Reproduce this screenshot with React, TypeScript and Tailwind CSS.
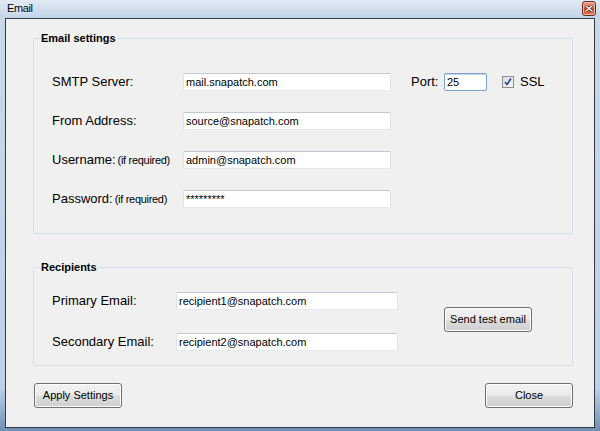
import type { ReactNode } from 'react'

const Input = ({ value, width, focused = false }: { value: string; width: string; focused?: boolean }) => (
  <div
    className={`${width} h-[18px] bg-white border rounded-[2px] flex items-center pl-[2px] text-[11px] leading-none ${
      focused ? 'border-[#7da2ce] shadow-[inset_0_1px_0_#c5daf1]' : 'border-t-[#c4c8cf] border-x-[#dfe2e7] border-b-[#e5e8ec]'
    }`}
  >
    {value}
  </div>
)

const Button = ({ children, className = '' }: { children: ReactNode; className?: string }) => (
  <button
    className={`w-[88px] h-[25px] rounded-[3px] border border-[#707070] bg-[linear-gradient(#f2f2f2_0%,#ebebeb_48%,#dddddd_52%,#cfcfcf_100%)] shadow-[inset_0_0_0_1px_#fcfcfc] text-[11px] text-black ${className}`}
  >
    {children}
  </button>
)

const Label = ({ text, note, width }: { text: string; note?: string; width: string }) => (
  <div className={`${width} shrink-0 flex items-baseline text-[13px]`}>
    <span>{text}</span>
    {note && <span className="ml-[2px] text-[11px] tracking-[-0.3px]">{note}</span>}
  </div>
)

const GroupBox = ({ title, className = '', children }: { title: string; className?: string; children: ReactNode }) => (
  <fieldset className={`w-[540px] border border-[#d5dfe5] rounded-[3px] pl-[6px] ${className}`}>
    <legend className="px-[1px] text-[11px] leading-[13px] font-bold">{title}</legend>
    {children}
  </fieldset>
)

export default function App() {
  return (
    <div className="w-[600px] h-[431px] flex flex-col bg-[linear-gradient(#c9d9eb,#bcd0e6_90%,#6f8fb5)] font-['Liberation_Sans',Arial,sans-serif] text-black">
      {/* title bar */}
      <div className="h-[18px] shrink-0 flex items-start pl-[7px] pr-[4px] bg-[linear-gradient(#e2ebf5,#cfdcec_60%,#c3d4e9)]">
        <span className="mt-[3px] text-[11px] leading-none tracking-[-0.4px] [text-shadow:0_0_5px_#fff]">Email</span>
        <div className="ml-auto mt-[1px] w-[14px] h-[15px] rounded-[3px] border border-[#6b2a1d] bg-[linear-gradient(#f0a58c,#e0603f_48%,#c73d1f_52%,#e07a55)] shadow-[inset_0_0_0_1px_#f6b9a6] flex items-center justify-center">
          <svg width="8" height="7" viewBox="0 0 8 7">
            <path d="M1 1 L7 6 M7 1 L1 6" stroke="#3a1a14" strokeWidth="2.6" strokeLinecap="square" />
            <path d="M1 1 L7 6 M7 1 L1 6" stroke="#fff" strokeWidth="1.4" strokeLinecap="square" />
          </svg>
        </div>
      </div>

      {/* client area */}
      <div className="flex-1 flex px-[5px] pb-[3px]">
        <div className="flex-1 flex flex-col border border-[#2f3a46] bg-[#f0f0f0] pl-[27px]">
          <GroupBox title="Email settings" className="mt-[13px] pt-[28px] pb-[25px]">
            <div className="flex flex-col gap-[21px] pl-[12px]">
              <div className="h-[18px] flex items-center">
                <Label text="SMTP Server:" width="w-[131px]" />
                <Input value="mail.snapatch.com" width="w-[208px]" />
                <span className="ml-[20px] w-[33px] text-[13px]">Port:</span>
                <Input value="25" width="w-[43px]" focused />
                <div className="ml-[15px] w-[12px] h-[12px] border border-[#8e8f8f] bg-[linear-gradient(135deg,#dcdcdc,#fafafa)] flex items-center justify-center">
                  <svg width="8" height="8" viewBox="0 0 8 8">
                    <path d="M1 4 L3 6.5 L7 0.5" fill="none" stroke="#21469a" strokeWidth="1.6" />
                  </svg>
                </div>
                <span className="ml-[6px] text-[13px]">SSL</span>
              </div>
              <div className="h-[18px] flex items-center">
                <Label text="From Address:" width="w-[131px]" />
                <Input value="source@snapatch.com" width="w-[208px]" />
              </div>
              <div className="h-[18px] flex items-center">
                <Label text="Username:" note="(if required)" width="w-[131px]" />
                <Input value="admin@snapatch.com" width="w-[208px]" />
              </div>
              <div className="h-[18px] flex items-center">
                <Label text="Password:" note="(if required)" width="w-[131px]" />
                <Input value="*********" width="w-[208px]" />
              </div>
            </div>
          </GroupBox>

          <GroupBox title="Recipients" className="mt-[27px] pt-[18px] pb-[14px]">
            <div className="flex items-center pl-[12px]">
              <div className="flex flex-col gap-[23px]">
                <div className="h-[18px] flex items-center">
                  <Label text="Primary Email:" width="w-[124px]" />
                  <Input value="recipient1@snapatch.com" width="w-[222px]" />
                </div>
                <div className="h-[18px] flex items-center">
                  <Label text="Secondary Email:" width="w-[124px]" />
                  <Input value="recipient2@snapatch.com" width="w-[222px]" />
                </div>
              </div>
              <Button className="ml-[46px] mt-[-4px]">Send test email</Button>
            </div>
          </GroupBox>

          <div className="w-[540px] mt-[17px] flex justify-between">
            <Button className="ml-[1px]">Apply Settings</Button>
            <Button>Close</Button>
          </div>
        </div>
      </div>
    </div>
  )
}
